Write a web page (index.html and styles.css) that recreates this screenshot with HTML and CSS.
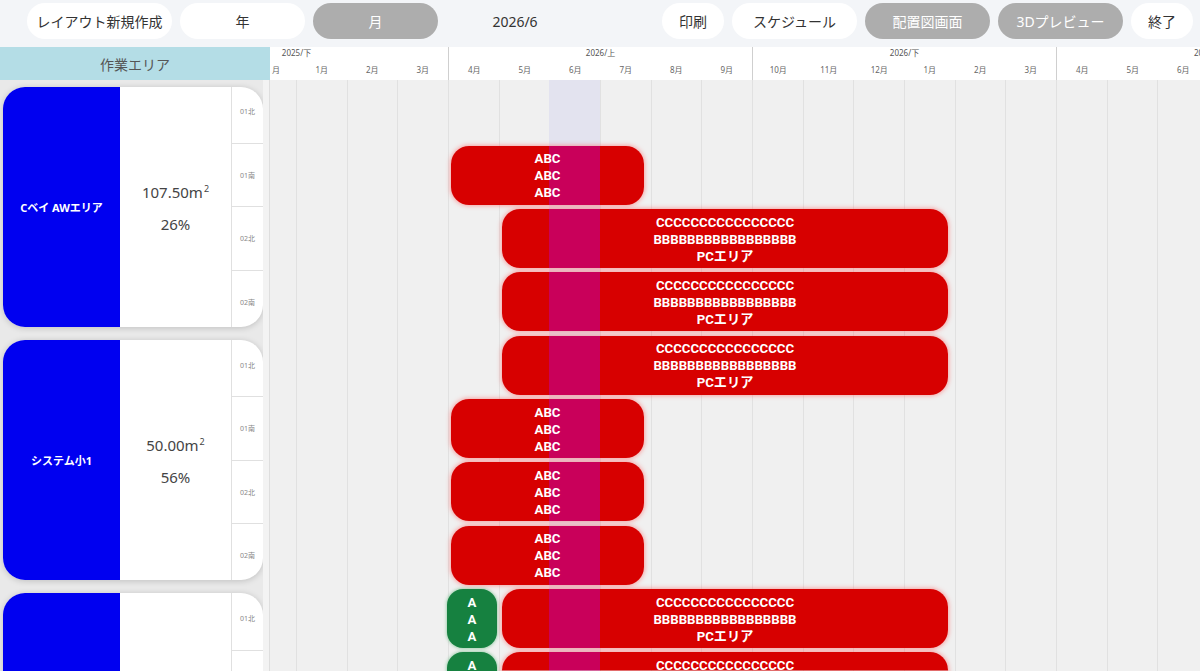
FILE: index.html
```html
<!DOCTYPE html>
<html lang="ja">
<head>
<meta charset="utf-8">
<title>レイアウト</title>
<link rel="stylesheet" href="styles.css">
</head>
<body>
<div class="app">
  <header class="toolbar">
    <button class="btn btn-wide">レイアウト新規作成</button>
    <button class="btn">年</button>
    <button class="btn is-off">月</button>
    <div class="current">2026/6</div>
    <div class="spacer"></div>
    <button class="btn btn-short">印刷</button>
    <button class="btn">スケジュール</button>
    <button class="btn is-off">配置図画面</button>
    <button class="btn is-off">3Dプレビュー</button>
    <button class="btn btn-short">終了</button>
  </header>

  <div class="sheet">
    <div class="area-head">作業エリア</div>

    <div class="time-head">
      <div class="track">
        <div class="half">
          <div class="half-label">2025/下</div>
          <div class="half-months"><span></span><span></span><span class="clip-left">月</span><span>1月</span><span>2月</span><span>3月</span></div>
        </div>
        <div class="half">
          <div class="half-label">2026/上</div>
          <div class="half-months"><span>4月</span><span>5月</span><span>6月</span><span>7月</span><span>8月</span><span>9月</span></div>
        </div>
        <div class="half">
          <div class="half-label">2026/下</div>
          <div class="half-months"><span>10月</span><span>11月</span><span>12月</span><span>1月</span><span>2月</span><span>3月</span></div>
        </div>
        <div class="half">
          <div class="half-label half-label-edge">20</div>
          <div class="half-months"><span>4月</span><span>5月</span><span>6月</span><span></span><span></span><span></span></div>
        </div>
      </div>
    </div>

    <div class="area-list">
      <div class="cards">
        <div class="card">
          <div class="card-name">Cベイ AWエリア</div>
          <div class="card-info"><div>107.50m<sup>2</sup></div><div>26%</div></div>
          <div class="card-subs">
            <div class="sub sub-first">01北</div>
            <div class="sub">01南</div>
            <div class="sub">02北</div>
            <div class="sub sub-last">02南</div>
          </div>
        </div>
        <div class="card">
          <div class="card-name">システム小1</div>
          <div class="card-info"><div>50.00m<sup>2</sup></div><div>56%</div></div>
          <div class="card-subs">
            <div class="sub sub-first">01北</div>
            <div class="sub">01南</div>
            <div class="sub">02北</div>
            <div class="sub sub-last">02南</div>
          </div>
        </div>
        <div class="card">
          <div class="card-name"></div>
          <div class="card-info"></div>
          <div class="card-subs">
            <div class="sub sub-first">01北</div>
            <div class="sub">01南</div>
            <div class="sub">02北</div>
            <div class="sub sub-last">02南</div>
          </div>
        </div>
      </div>
      <div class="scroll-track"></div>
    </div>

    <div class="time-body">
      <div class="track">
        <div class="today" style="left:405.33px"></div>
        <div class="rows">
          <div class="row"></div>
          <div class="row">
            <div class="bar" style="left:307px;width:193px"><span>ABC</span><span>ABC</span><span>ABC</span></div>
          </div>
          <div class="row">
            <div class="bar" style="left:358px;width:446px"><span>CCCCCCCCCCCCCCCC</span><span>BBBBBBBBBBBBBBBBB</span><span>PCエリア</span></div>
          </div>
          <div class="row">
            <div class="bar" style="left:358px;width:446px"><span>CCCCCCCCCCCCCCCC</span><span>BBBBBBBBBBBBBBBBB</span><span>PCエリア</span></div>
          </div>
          <div class="row">
            <div class="bar" style="left:358px;width:446px"><span>CCCCCCCCCCCCCCCC</span><span>BBBBBBBBBBBBBBBBB</span><span>PCエリア</span></div>
          </div>
          <div class="row">
            <div class="bar" style="left:307px;width:193px"><span>ABC</span><span>ABC</span><span>ABC</span></div>
          </div>
          <div class="row">
            <div class="bar" style="left:307px;width:193px"><span>ABC</span><span>ABC</span><span>ABC</span></div>
          </div>
          <div class="row">
            <div class="bar" style="left:307px;width:193px"><span>ABC</span><span>ABC</span><span>ABC</span></div>
          </div>
          <div class="row">
            <div class="bar bar-green" style="left:303px;width:50px"><span>A</span><span>A</span><span>A</span></div>
            <div class="bar" style="left:358px;width:446px"><span>CCCCCCCCCCCCCCCC</span><span>BBBBBBBBBBBBBBBBB</span><span>PCエリア</span></div>
          </div>
          <div class="row">
            <div class="bar bar-green" style="left:303px;width:50px"><span>A</span><span>A</span><span>A</span></div>
            <div class="bar" style="left:358px;width:446px"><span>CCCCCCCCCCCCCCCC</span><span>BBBBBBBBBBBBBBBBB</span><span>PCエリア</span></div>
          </div>
        </div>
      </div>
    </div>
  </div>
</div>
</body>
</html>
```

FILE: styles.css
```css
* { box-sizing: border-box; }

html, body {
  margin: 0;
  padding: 0;
}

body {
  font-family: "Noto Sans", "Noto Sans CJK JP", sans-serif;
  background: #f3f5f8;
  color: #333;
}

.app {
  width: 1200px;
  height: 671px;
  overflow: hidden;
  display: flex;
  flex-direction: column;
}

/* ---------- toolbar ---------- */
.toolbar {
  height: 47px;
  flex: 0 0 47px;
  display: flex;
  align-items: flex-start;
  gap: 8px;
  padding: 3px 7px 0 27px;
  background: #f3f5f8;
}

.btn {
  height: 36px;
  width: 125px;
  border: none;
  border-radius: 18px;
  background: #ffffff;
  color: #333;
  font-family: "Noto Sans", "Noto Sans CJK JP", sans-serif;
  font-size: 14px;
  padding: 0;
  display: flex;
  align-items: center;
  justify-content: center;
  white-space: nowrap;
}

.btn-wide { width: 145px; }
.btn-short { width: 62px; }

.btn.is-off {
  background: #adadad;
  color: #ffffff;
}

.current {
  width: 138px;
  height: 36px;
  display: flex;
  align-items: center;
  justify-content: center;
  font-size: 14px;
  color: #333;
}

.spacer { flex: 1; }

/* ---------- sheet ---------- */
.sheet {
  flex: 1;
  display: grid;
  grid-template-columns: 270px 930px;
  grid-template-rows: 33px 1fr;
  overflow: hidden;
}

.area-head {
  background: #b4dde6;
  color: #555;
  font-size: 14px;
  display: flex;
  align-items: center;
  justify-content: center;
}

.time-head {
  background: #ffffff;
  overflow: hidden;
}

.track {
  width: 1216px;
  margin-left: -126px;
  display: flex;
}

.time-head .track {
  height: 100%;
}

.half {
  width: 304px;
  flex: 0 0 304px;
  border-left: 1px solid #cfcfcf;
  display: flex;
  flex-direction: column;
}

.half-label {
  height: 12px;
  font-size: 8px;
  line-height: 12px;
  color: #555;
  text-align: center;
}

.half-label-edge {
  text-align: left;
  padding-left: 137px;
}

.half-months {
  flex: 1;
  display: grid;
  grid-template-columns: repeat(6, minmax(0, 1fr));
  padding-bottom: 1px;
}

.half-months span {
  display: flex;
  align-items: center;
  justify-content: center;
  font-size: 8px;
  color: #666;
}

.half-months .clip-left {
  justify-content: flex-start;
  padding-left: 26px;
}

/* ---------- area list ---------- */
.area-list {
  display: flex;
  background: #e9e9e9;
  overflow: hidden;
}

.cards {
  flex: 1;
  display: flex;
  flex-direction: column;
  padding-left: 3px;
}

.scroll-track {
  width: 7px;
  background: #f3f3f3;
  border-right: 1px solid #dedede;
}

.card {
  flex: 0 0 240px;
  height: 240px;
  width: 260px;
  margin: 6.67px 0;
  border-radius: 22px;
  overflow: hidden;
  background: #ffffff;
  box-shadow: 0 1px 6px rgba(0, 0, 0, 0.18);
  display: grid;
  grid-template-columns: 117px 111px 32px;
}

.card-name {
  background: #0000f0;
  color: #ffffff;
  font-weight: 700;
  font-size: 11px;
  display: flex;
  align-items: center;
  justify-content: center;
  padding-top: 1px;
}

.card-info {
  display: flex;
  flex-direction: column;
  align-items: center;
  justify-content: center;
  font-size: 15px;
  line-height: 32px;
  color: #444;
  padding-top: 2px;
}

.card-info sup {
  font-size: 9px;
  line-height: 0;
  vertical-align: 6px;
  margin-left: 1px;
}

.card-subs {
  border-left: 1px solid #e0e0e0;
  display: grid;
  grid-template-rows: 56.33px 63.33px 63.33px 57px;
}

.sub {
  display: flex;
  align-items: center;
  justify-content: center;
  font-size: 7px;
  color: #888;
  border-top: 1px solid #e0e0e0;
}

.sub-first {
  border-top: none;
  padding-bottom: 7px;
}

.sub-last { padding-top: 7px; }

/* ---------- time body ---------- */
.time-body {
  background: #f0f0f0;
  overflow: hidden;
}

.time-body .track {
  position: relative;
  display: block;
  height: 100%;
  background-image: repeating-linear-gradient(to right, #e1e1e1 0 1px, transparent 1px 50.667px);
}

.today {
  position: absolute;
  top: 0;
  bottom: 0;
  width: 50.67px;
  background: #e3e3ef;
}

.rows {
  position: relative;
}

.row {
  position: relative;
  height: 63.333px;
}

.bar {
  position: absolute;
  top: 2.5px;
  height: 59px;
  padding-top: 1px;
  border-radius: 18px;
  background: linear-gradient(to right, #d70000 0, #d70000 549.3px, #c9005a 549.3px, #c9005a 600px, #d70000 600px) fixed;
  box-shadow: 0 0 4px 1px rgba(255, 90, 90, 0.5);
  color: #ffffff;
  font-family: Roboto, "Noto Sans CJK JP", sans-serif;
  font-weight: 700;
  font-size: 13.2px;
  line-height: 17px;
  display: flex;
  flex-direction: column;
  align-items: center;
  justify-content: center;
  white-space: nowrap;
}

.bar-green {
  background: #168140;
  border-radius: 16px;
  box-shadow: 0 0 3px 1px rgba(80, 180, 110, 0.45);
}
```
